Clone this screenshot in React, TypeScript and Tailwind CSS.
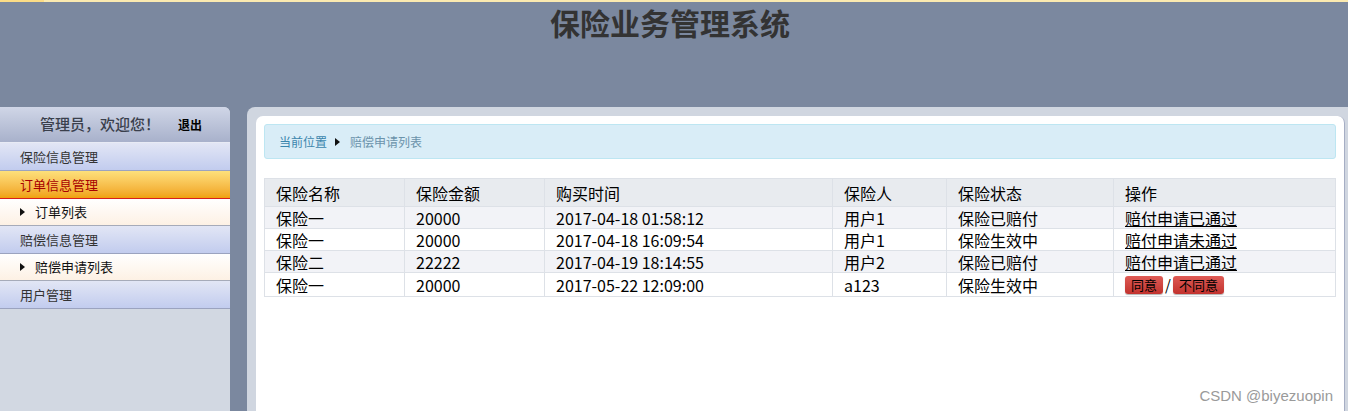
const font = { fontFamily: '"Noto Sans CJK SC", "Noto Sans", sans-serif' };

type Row = { name: string; amount: string; time: string; user: string; status: string; op: string | null };

const rows: Row[] = [
  { name: "保险一", amount: "20000", time: "2017-04-18 01:58:12", user: "用户1", status: "保险已赔付", op: "赔付申请已通过" },
  { name: "保险一", amount: "20000", time: "2017-04-18 16:09:54", user: "用户1", status: "保险生效中", op: "赔付申请未通过" },
  { name: "保险二", amount: "22222", time: "2017-04-19 18:14:55", user: "用户2", status: "保险已赔付", op: "赔付申请已通过" },
  { name: "保险一", amount: "20000", time: "2017-05-22 12:09:00", user: "a123", status: "保险生效中", op: null },
];

function Arrow() {
  return (
    <svg width="5" height="8" viewBox="0 0 5 8" className="shrink-0">
      <path d="M0 0 L5 4 L0 8 Z" fill="#111" />
    </svg>
  );
}

function MenuHead({ label, active }: { label: string; active?: boolean }) {
  return (
    <div
      className={`h-[28px] flex items-center pl-[20px] text-[13px] border-b ${
        active
          ? "bg-gradient-to-b from-[#fde07a] to-[#f0a208] text-[#a80000] border-[#d62020]"
          : "bg-gradient-to-b from-[#e2e6f5] to-[#c2ccee] text-[#333] border-[#9ba3bf]"
      }`}
    >
      {label}
    </div>
  );
}

function SubItem({ label }: { label: string }) {
  return (
    <div className="h-[27px] flex items-center gap-[10px] pl-[20px] text-[13px] text-[#111] bg-gradient-to-b from-[#ffffff] to-[#fdf1e4] border-b border-[#a6abb9]">
      <Arrow />
      <span>{label}</span>
    </div>
  );
}

function RedButton({ children }: { children: React.ReactNode }) {
  return (
    <button className="h-[18px] px-[6px] text-[13px] leading-[18px] rounded-[3px] bg-gradient-to-b from-[#de5a55] to-[#c2322e] shadow-[0_1px_1px_rgba(0,0,0,0.3)] text-black">
      {children}
    </button>
  );
}

export default function App() {
  const cols = ["w-[140px]", "w-[140px]", "w-[288px]", "w-[114px]", "w-[167px]", "w-[222px]"];
  const heads = ["保险名称", "保险金额", "购买时间", "保险人", "保险状态", "操作"];
  return (
    <div className="h-[411px] overflow-hidden bg-[#7b889f] relative" style={font}>
      <div className="h-[2px] flex">
        <div className="w-[44px] bg-[#fbdc86]" />
        <div className="flex-1 bg-[#fbeab0]" />
      </div>
      <header className="h-[105px] flex justify-center">
        <h1 className="text-[30px] font-bold text-[#333] leading-[40px] mr-[8px]">保险业务管理系统</h1>
      </header>

      <div className="flex h-[304px]">
        <aside className="w-[230px] bg-[#d2d8e2] rounded-tr-[6px] overflow-hidden">
          <div className="h-[36px] flex items-center bg-gradient-to-b from-[#d0d6e7] to-[#a8b1cb] border-b border-[#e8ebf5]">
            <span className="ml-[40px] text-[15px] text-[#3a3f4c] font-medium">管理员，欢迎您！</span>
            <span className="ml-[18px] text-[12px] font-bold text-black">退出</span>
          </div>
          <MenuHead label="保险信息管理" />
          <MenuHead label="订单信息管理" active />
          <SubItem label="订单列表" />
          <MenuHead label="赔偿信息管理" />
          <SubItem label="赔偿申请列表" />
          <MenuHead label="用户管理" />
        </aside>

        <main className="ml-[17px] flex-1 bg-[#d0d6e0] rounded-tl-[8px] pt-[9px] pl-[9px] pr-[3px]">
          <div className="h-full bg-white rounded-t-[7px] border-r border-[#a6aec4] px-[8px] pt-[8px]">
            <div className="h-[35px] flex items-center gap-[8px] pl-[14px] bg-[#d9edf7] border border-[#bde6f2] rounded-[3px] text-[12px]">
              <span className="text-[#3b86ad]">当前位置</span>
              <Arrow />
              <span className="ml-[2px] text-[#6b93ab]">赔偿申请列表</span>
            </div>

            <table className="mt-[19px] w-[1072px] border-collapse text-[16px] text-black">
              <thead>
                <tr className="bg-[#e8ebef] h-[28px]">
                  {heads.map((h, i) => (
                    <th key={h} className={`${cols[i]} border border-[#dde1e7] text-left font-normal pl-[11px] leading-[26px]`}>
                      {h}
                    </th>
                  ))}
                </tr>
              </thead>
              <tbody>
                {rows.map((r, i) => (
                  <tr key={i} className={`${i % 2 === 0 ? "bg-[#f2f3f7]" : "bg-white"} ${r.op ? "h-[22px]" : "h-[24px]"}`}>
                    <td className="border border-[#dde1e7] pl-[11px] leading-[20px]">{r.name}</td>
                    <td className="border border-[#dde1e7] pl-[11px] leading-[20px]">{r.amount}</td>
                    <td className="border border-[#dde1e7] pl-[11px] leading-[20px]">{r.time}</td>
                    <td className="border border-[#dde1e7] pl-[11px] leading-[20px]">{r.user}</td>
                    <td className="border border-[#dde1e7] pl-[11px] leading-[20px]">{r.status}</td>
                    <td className="border border-[#dde1e7] pl-[11px] leading-[20px]">
                      {r.op ? (
                        <span className="underline decoration-1 underline-offset-1">{r.op}</span>
                      ) : (
                        <div className="flex items-center gap-[2px]">
                          <RedButton>同意</RedButton>
                          <span className="text-[15px] leading-[18px]">/</span>
                          <RedButton>不同意</RedButton>
                        </div>
                      )}
                    </td>
                  </tr>
                ))}
              </tbody>
            </table>
          </div>
        </main>
      </div>

      <div className="absolute right-[15px] bottom-[4px] text-[15px] text-[#9a9a9a]" style={{ fontFamily: '"Liberation Sans", Arial, sans-serif' }}>
        CSDN @biyezuopin
      </div>
    </div>
  );
}
